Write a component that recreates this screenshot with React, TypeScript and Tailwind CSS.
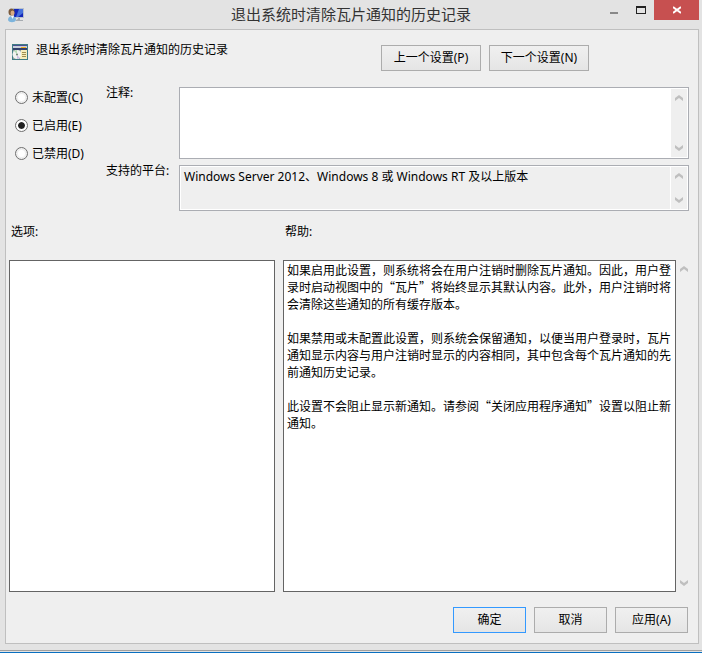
import { useState } from 'react';
import type { ReactNode } from 'react';

const STATES = [
  { id: 'unset', label: '未配置(C)' },
  { id: 'enabled', label: '已启用(E)' },
  { id: 'disabled', label: '已禁用(D)' },
];

const HELP = [
  '如果启用此设置，则系统将会在用户注销时删除瓦片通知。因此，用户登录时启动视图中的“瓦片”将始终显示其默认内容。此外，用户注销时将会清除这些通知的所有缓存版本。',
  '如果禁用或未配置此设置，则系统会保留通知，以便当用户登录时，瓦片通知显示内容与用户注销时显示的内容相同，其中包含每个瓦片通知的先前通知历史记录。',
  '此设置不会阻止显示新通知。请参阅“关闭应用程序通知”设置以阻止新通知。',
];

function ConsoleIcon() {
  return (
    <svg width="16" height="16" viewBox="0 0 16 16" aria-hidden="true">
      <path d="M5 1h11v10H5z" fill="#b9c0cc" />
      <path d="M6 2h9v8H6z" fill="#1527b8" />
      <path d="M11 2h4v4l-5 4H8z" fill="#4470dc" />
      <path d="M10 11h2v2h3v1H8v-1l2-1z" fill="#a6abb0" />
      <ellipse cx="3.5" cy="5" rx="3" ry="3.5" fill="#7a5a3c" />
      <ellipse cx="4.5" cy="6" rx="2" ry="2.5" fill="#d8ab80" />
      <path d="M0 13c0-3 2-4 4-4s4 1 4 4c-1 3-7 3-8 0z" fill="#7db4dc" />
      <path d="M3 9h3l-1.500 3z" fill="#f2f7fb" />
    </svg>
  );
}

function PolicyIcon() {
  return (
    <svg width="16" height="16" viewBox="0 0 16 16" aria-hidden="true">
      <path d="M0 0h16v16H0z" fill="#3f7c84" />
      <path d="M1 1h14v1H1z" fill="#4a5090" />
      <path d="M1 2h14v2H1z" fill="#c9d0dc" />
      <path d="M9 3h5v1H9z" fill="#f0a820" />
      <path d="M1 4h14v2H1z" fill="#33406c" />
      <path d="M1 6h14v9H1z" fill="#8fa39f" />
      <circle cx="5" cy="10.5" r="4.5" fill="#f1f3f0" />
      <path d="M5 10l-3-3 3-1z" fill="#b4dcb4" />
      <path d="M5 11l3 3-3 1z" fill="#cfc0e4" />
      <circle cx="5" cy="10.5" r="1" fill="#6b8070" />
      <path d="M9 6h6v9H8v-2l1-1z" fill="#f6eebb" />
      <path d="M10 8.5h4M10 10.5h4M10 12.5h4" stroke="#a08f50" />
    </svg>
  );
}

function Chevron({ down = false }: { down?: boolean }) {
  return (
    <svg width="8" height="6" viewBox="0 0 8 6" aria-hidden="true">
      <path
        d={down ? 'M0 0l4 3l4-3v3l-4 3l-4-3z' : 'M0 6l4-3l4 3v-3l-4-3l-4 3z'}
        fill="#bfbfbf"
      />
    </svg>
  );
}

function ScrollBar() {
  return (
    <div className="flex w-4 shrink-0 flex-col items-center justify-between bg-[#efefef] py-1.5">
      <button type="button" aria-label="向上滚动" className="flex">
        <Chevron />
      </button>
      <button type="button" aria-label="向下滚动" className="flex">
        <Chevron down />
      </button>
    </div>
  );
}

function PushButton({ children, className }: { children: ReactNode; className: string }) {
  return (
    <button
      type="button"
      className={`h-[26px] border bg-linear-to-b from-[#f0f0f0] to-[#e5e5e5] pb-0.5 text-center ${className}`}
    >
      {children}
    </button>
  );
}

export default function App() {
  const [state, setState] = useState('enabled');
  const [comment, setComment] = useState('');

  return (
    <div
      lang="zh-CN"
      className="flex min-h-screen flex-col border-b border-[#0a6fc0] bg-[#e3e3e3] font-['Noto_Sans','Noto_Sans_CJK_SC',sans-serif] text-[12px] leading-[17px] text-black"
    >
      <header className="flex h-[29px] items-start">
        <div className="w-[103px] pt-[7px] pl-2">
          <ConsoleIcon />
        </div>
        <h1 className="flex-1 pt-[3px] text-center text-[15px] leading-[22px] text-[#333]">
          退出系统时清除瓦片通知的历史记录
        </h1>
        <div className="flex w-[103px] items-start">
          <button type="button" aria-label="最小化" className="flex h-5 w-7 items-center pt-1.5 pl-[11px]">
            <span className="h-0.5 w-2 bg-[#888]" />
          </button>
          <button type="button" aria-label="最大化" className="flex h-5 w-[27px] items-center justify-center">
            <span className="h-2 w-2.5 border border-t-2 border-[#222]" />
          </button>
          <button type="button" aria-label="关闭" className="flex h-5 w-[45px] items-center justify-center bg-[#c75050]">
            <svg width="8" height="8" viewBox="0 0 8 8" aria-hidden="true">
              <path d="M0 1l8 6M8 1l-8 6" stroke="#fff" strokeWidth="2" />
            </svg>
          </button>
        </div>
      </header>

      <main className="mr-[3px] ml-[5px] flex flex-1 flex-col border border-[#bfbfbf] bg-[#efefef] pr-[9px] pb-2.5 pl-[3px]">
        <div className="flex items-start">
          <div className="flex w-[372px] gap-2 pt-[11px] pl-[3px]">
            <div className="pt-[3px]">
              <PolicyIcon />
            </div>
            <h2>退出系统时清除瓦片通知的历史记录</h2>
          </div>
          <div className="flex gap-2 pt-[15px]">
            <PushButton className="w-[100px] border-[#acacac]">上一个设置(P)</PushButton>
            <PushButton className="w-[100px] border-[#acacac]">下一个设置(N)</PushButton>
          </div>
        </div>

        <div className="flex pt-4">
          <fieldset aria-label="策略状态" className="flex w-[97px] flex-col gap-[11px] pt-0.5 pl-1.5">
            {STATES.map((s) => (
              <label key={s.id} className="flex items-center gap-1">
                <input
                  type="radio"
                  name="state"
                  checked={state === s.id}
                  onChange={() => setState(s.id)}
                  className="size-[13px] appearance-none rounded-full border border-[#707070] bg-white bg-clip-content p-0.5 checked:bg-[#222] checked:shadow-[inset_0_0_0_2px_#fff]"
                />
                {s.label}
              </label>
            ))}
          </fieldset>

          <div className="flex flex-1 flex-col gap-1.5">
            <div className="flex">
              <label htmlFor="comment" className="-mt-[3px] w-[73px] shrink-0">
                注释:
              </label>
              <div className="flex h-[72px] flex-1 border border-[#abadb3] bg-white p-px">
                <textarea
                  id="comment"
                  value={comment}
                  onChange={(e) => setComment(e.target.value)}
                  className="flex-1 resize-none px-1 outline-none"
                />
                <ScrollBar />
              </div>
            </div>
            <div className="flex">
              <label htmlFor="platforms" className="-mt-[3px] w-[73px] shrink-0">
                支持的平台:
              </label>
              <div className="flex h-[46px] flex-1 gap-px border border-[#abadb3] bg-white p-px">
                <textarea
                  id="platforms"
                  readOnly
                  value="Windows Server 2012、Windows 8 或 Windows RT 及以上版本"
                  className="flex-1 resize-none bg-[#efefef] px-[3px] pt-px outline-none"
                />
                <ScrollBar />
              </div>
            </div>
          </div>
        </div>

        <div className="-mr-[3px] flex flex-1 pt-3">
          <section className="flex flex-[266] flex-col">
            <h3 className="h-[37px] pl-0.5">选项:</h3>
            <div className="flex-1 border border-[#646464] bg-white" />
          </section>
          <section className="ml-2 flex flex-[409] flex-col">
            <h3 className="h-[37px] pl-0.5">帮助:</h3>
            <div className="flex flex-1">
              <div className="flex flex-1 flex-col gap-[17px] border border-[#646464] bg-white px-[3px] font-['Noto_Sans_CJK_SC',sans-serif]">
                {HELP.map((p) => (
                  <p key={p}>{p}</p>
                ))}
              </div>
              <ScrollBar />
            </div>
          </section>
        </div>

        <footer className="flex justify-end gap-2 pt-[15px] pr-px">
          <PushButton className="w-[73px] border-[#3399ff]">确定</PushButton>
          <PushButton className="w-[73px] border-[#acacac]">取消</PushButton>
          <PushButton className="w-[73px] border-[#acacac]">应用(A)</PushButton>
        </footer>
      </main>

      <div className="mt-1.5 h-0.5 border-t border-[#a0a0a0]" />
    </div>
  );
}
